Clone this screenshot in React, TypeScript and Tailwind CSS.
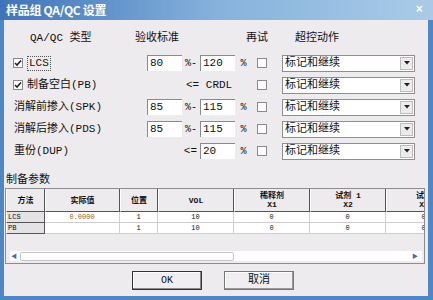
import { useState } from "react"

const font = { fontFamily: '"Liberation Mono", "Noto Sans CJK SC", monospace' }

function Check({ checked = false }: { checked?: boolean }) {
    return (
        <span className="inline-flex w-[10px] h-[10px] border border-[#8a8a8a] bg-white items-center justify-center shrink-0">
            {checked && (
                <svg width="8" height="8" viewBox="0 0 8 8">
                    <path d="M1 4 L3 6 L7 1.5" stroke="#222" strokeWidth="1.6" fill="none" />
                </svg>
            )}
        </span>
    )
}

function Field({ value }: { value: string }) {
    return (
        <div className="w-[35px] h-[16px] bg-white border-t border-l border-[#8a8a8a] border-b-[#e8e8e8] border-r-[#e8e8e8] px-[2px] text-[11px] leading-[15px] text-[#111]">
            {value}
        </div>
    )
}

function Combo() {
    return (
        <div className="w-[133px] h-[17px] bg-white border border-[#8f8f8f] flex items-center justify-between">
            <span className="pl-[2px] text-[11px] leading-[15px] text-[#111]">标记和继续</span>
            <span className="w-[13px] h-[13px] mr-[1px] bg-[#ececec] border border-[#bdbdbd] flex items-center justify-center">
                <svg width="6" height="4" viewBox="0 0 6 4"><path d="M0 0 H6 L3 3.5 Z" fill="#222" /></svg>
            </span>
        </div>
    )
}

export default function App() {
    const [rows] = useState([
        { label: "LCS", check: true, lo: "80", hi: "120", mode: "range" },
        { label: "制备空白(PB)", check: true, mode: "crdl" },
        { label: "消解前掺入(SPK)", lo: "85", hi: "115", mode: "range" },
        { label: "消解后掺入(PDS)", lo: "85", hi: "115", mode: "range" },
        { label: "重份(DUP)", hi: "20", mode: "le" },
    ])

    const cols = [
        { w: "w-[39px]", head: "方法" },
        { w: "w-[75px]", head: "实际值" },
        { w: "w-[38px]", head: "位置" },
        { w: "w-[76px]", head: "VOL" },
        { w: "w-[76px]", head: "稀释剂", sub: "X1" },
        { w: "w-[76px]", head: "试剂 1", sub: "X2" },
        { w: "w-[76px]", head: "试剂", sub: "X3" },
    ]
    const data = [
        ["LCS", "0.0000", "1", "10", "0", "0", "0"],
        ["PB", "", "1", "10", "0", "0", "0"],
    ]

    return (
        <div className="w-[433px] h-[300px] overflow-hidden flex flex-col bg-[#4f86c6]" style={font}>
            <div className="h-[20px] shrink-0 flex items-center justify-between px-[6px] bg-gradient-to-r from-[#3f74ba] via-[#86b2dc] to-[#a9cbe8]">
                <span className="text-white font-bold text-[12px] tracking-tight" style={{ fontFamily: '"Noto Sans CJK SC", serif' }}>样品组 QA/QC 设置</span>
                <span className="text-white font-bold text-[12px] mr-[4px]">×</span>
            </div>
            <div className="flex-1 flex flex-col bg-[#eeebef] ml-[4px] mr-[5px] mb-[4px] text-[#111] text-[11px]">
                <div className="flex items-center h-[32px] pt-[4px] text-[11px]">
                    <span className="ml-[26px] w-[105px]">QA/QC 类型</span>
                    <span className="w-[111px]">验收标准</span>
                    <span className="w-[49px]">再试</span>
                    <span>超控动作</span>
                </div>
                <div className="flex flex-col">
                    {rows.map((r, i) => (
                        <div key={i} className="flex items-center h-[22px]">
                            <div className="w-[143px] flex items-center gap-[4px] pl-[9px]">
                                {r.check !== undefined ? (
                                    <>
                                        <Check checked />
                                        <span className={i === 0 ? "border border-dotted border-[#555] px-[1px] leading-[13px]" : ""}>{r.label}</span>
                                    </>
                                ) : (
                                    <span className="pl-[1px]">{r.label}</span>
                                )}
                            </div>
                            <div className="w-[105px] flex items-center">
                                {r.mode === "range" && (
                                    <>
                                        <Field value={r.lo!} />
                                        <span className="w-[18px] text-center text-[10px]">%-</span>
                                        <Field value={r.hi!} />
                                        <span className="w-[17px] text-center text-[10px]">%</span>
                                    </>
                                )}
                                {r.mode === "crdl" && <span className="pl-[39px]">&lt;= CRDL</span>}
                                {r.mode === "le" && (
                                    <>
                                        <span className="w-[53px] text-right pr-[3px]">&lt;=</span>
                                        <Field value={r.hi!} />
                                        <span className="w-[17px] text-center text-[10px]">%</span>
                                    </>
                                )}
                            </div>
                            <div className="w-[30px] flex items-center pl-[5px]">
                                <Check />
                            </div>
                            <Combo />
                        </div>
                    ))}
                </div>
                <div className="mt-[11px] ml-[2px] text-[11px] leading-[14px]">制备参数</div>
                <div className="mt-[1px] ml-[1px] w-[420px] h-[76px] border border-[#8d8d8d] bg-[#eeebef] flex flex-col overflow-hidden">
                    <div className="flex h-[23px] shrink-0">
                        {cols.map((c, i) => (
                            <div key={i} className={`${c.w} shrink-0 border-r border-b border-[#555] border-t-white border-l border-l-white flex flex-col items-center justify-center text-[8px] leading-[9px] font-bold`}>
                                <span>{c.head}</span>
                                {c.sub && <span>{c.sub}</span>}
                            </div>
                        ))}
                    </div>
                    {data.map((row, ri) => (
                        <div key={ri} className="flex h-[11px] shrink-0">
                            {row.map((v, ci) => (
                                <div
                                    key={ci}
                                    className={`${cols[ci].w} shrink-0 text-[7px] leading-[10px] ${ci === 0 ? "bg-[#e4e2e4] border-r border-b border-[#555] border-l border-l-white pl-[1px]" : "bg-white border-r border-b border-[#cfcfcf] text-center"} ${ci === 1 ? "text-[#a0640a]" : ""}`}
                                >
                                    {v}
                                </div>
                            ))}
                        </div>
                    ))}
                    <div className="flex-1" />
                    <div className="h-[10px] shrink-0 mb-[2px] ml-[4px] mr-[2px] bg-white flex items-center">
                        <span className="text-[6px] text-[#4a6fa0] w-[10px] pl-[1px]">◀</span>
                        <div className="w-[214px] h-[9px] border border-[#c6c6c6] rounded-[2px] bg-white" />
                        <div className="flex-1" />
                        <span className="text-[6px] text-[#4a6fa0] w-[10px]">▶</span>
                    </div>
                </div>
                <div className="flex justify-center gap-[22px] mt-[7px] ml-[-6px]">
                    <button className="w-[70px] h-[19px] bg-[#f0eef0] border border-[#333] shadow-[inset_-1px_-1px_0_#888,inset_1px_1px_0_#fff] text-[10px]">OK</button>
                    <button className="w-[70px] h-[19px] bg-[#f0eef0] border border-[#777] shadow-[inset_-1px_-1px_0_#999,inset_1px_1px_0_#fff] text-[11px]">取消</button>
                </div>
            </div>
        </div>
    )
}
